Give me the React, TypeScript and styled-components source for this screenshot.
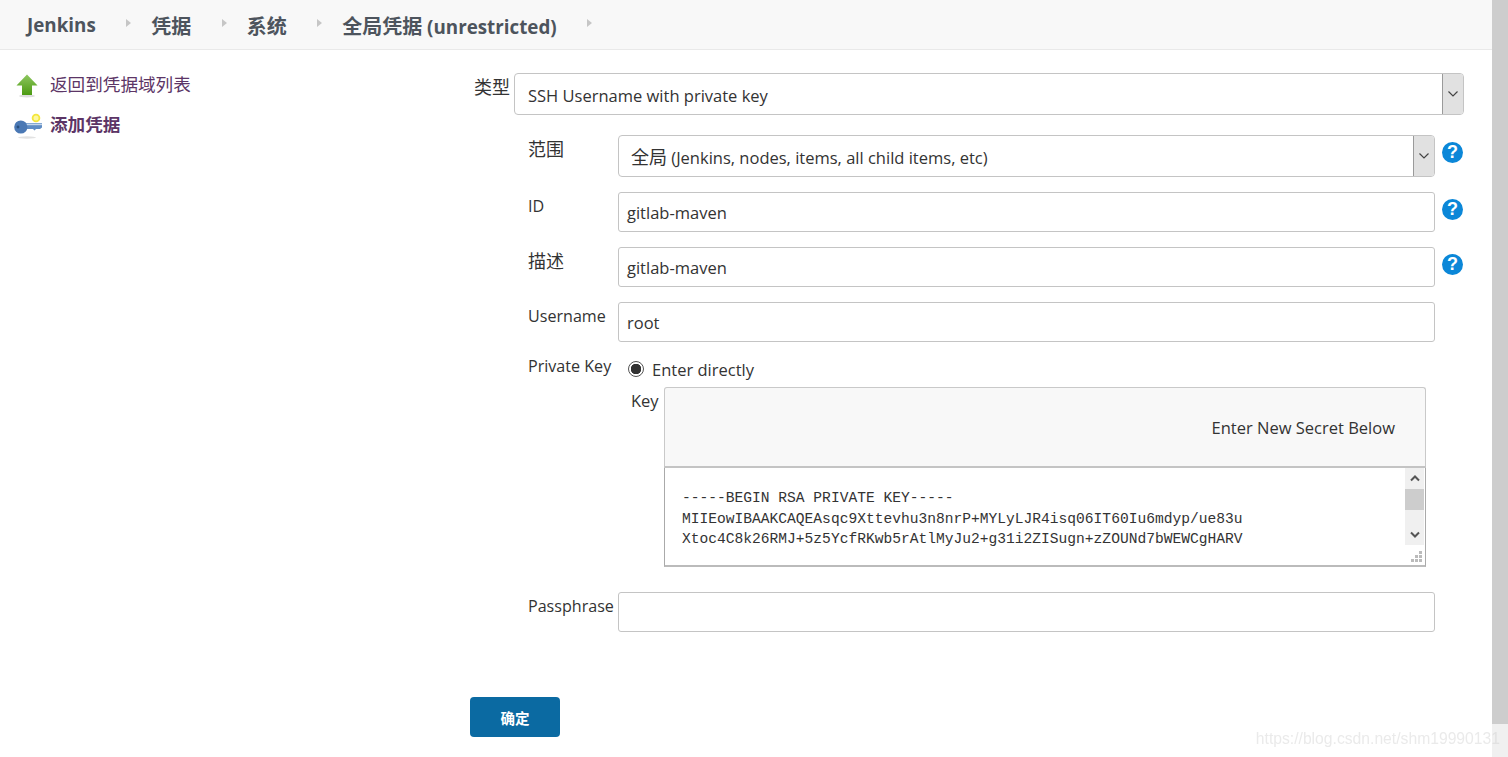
import { FC, ReactNode } from "react"
import styled, { createGlobalStyle } from "styled-components"

const FONT = `"Open Sans", "Noto Sans CJK SC", sans-serif`

const GlobalStyle = createGlobalStyle`
  html, body {
    margin: 0;
    height: 757px;
    overflow: hidden;
    background: #fff;
  }
  * {
    box-sizing: border-box;
  }
  body {
    font-family: ${FONT};
    font-size: 16.5px;
    color: #333;
  }
`

const crumbs: { cjk?: string; text?: string }[] = [
  { text: "Jenkins" },
  { cjk: "凭据" },
  { cjk: "系统" },
  { cjk: "全局凭据", text: " (unrestricted)" },
]

const UpIcon = () => (
  <svg width="26" height="26" viewBox="0 0 26 26">
    <defs>
      <linearGradient id="upg" x1="0" y1="0" x2="0" y2="1">
        <stop offset="0" stopColor="#8ec760" />
        <stop offset="1" stopColor="#4c9a12" />
      </linearGradient>
    </defs>
    <ellipse cx="13" cy="24" rx="8" ry="1.4" fill="#ddd" />
    <path d="M13 2.5 L23.5 13.5 H18 V23 H8 V13.5 H2.5 Z" fill="url(#upg)" />
  </svg>
)

const KeyIcon = () => (
  <svg width="30" height="28" viewBox="0 0 30 28">
    <ellipse cx="13" cy="26.5" rx="9" ry="1.2" fill="#e2e2e2" />
    <circle cx="22" cy="7" r="3.4" fill="#fdf8a0" stroke="#f4e63c" strokeWidth="1.8" />
    <path d="M10 12 H28 V16.5 L26 18 H22 L20.5 19.5 L19 18 H10 Z" fill="#5f8cc4" />
    <rect x="11" y="12.6" width="17" height="1.6" fill="#c4d6ec" />
    <circle cx="6.8" cy="16" r="6.6" fill="#4a78b4" />
    <circle cx="4" cy="16" r="1.4" fill="#28507f" />
  </svg>
)

const Chevron = () => (
  <svg width="12" height="8" viewBox="0 0 12 8">
    <path d="M1.5 1.5 L6 6 L10.5 1.5" fill="none" stroke="#444" strokeWidth="1.2" />
  </svg>
)

type FieldProps = {
  label: ReactNode
  help?: boolean
  children: ReactNode
}

const Field: FC<FieldProps> = ({ label, help, children }) => (
  <FieldRow>
    <FieldLabel>{label}</FieldLabel>
    {children}
    {help && <HelpBadge>?</HelpBadge>}
  </FieldRow>
)

const App = () => {
  return (
    <>
      <GlobalStyle />
      <Page>
        <Main>
          <Breadcrumbs>
            {crumbs.map((c, idx) => (
              <Crumb key={idx}>
                <CrumbText>
                  {c.cjk && <CrumbCjk>{c.cjk}</CrumbCjk>}
                  {c.text}
                </CrumbText>
                <CrumbArrow />
              </Crumb>
            ))}
          </Breadcrumbs>
          <Body>
            <Sidebar>
              <SideItem>
                <IconSlot>
                  <UpIcon />
                </IconSlot>
                <SideLink>返回到凭据域列表</SideLink>
              </SideItem>
              <SideItem>
                <IconSlot>
                  <KeyIcon />
                </IconSlot>
                <SideLink $active>添加凭据</SideLink>
              </SideItem>
            </Sidebar>
            <Form>
              <KindRow>
                <KindLabel>类型</KindLabel>
                <Select>
                  <SelectValue>SSH Username with private key</SelectValue>
                  <SelectArrow>
                    <Chevron />
                  </SelectArrow>
                </Select>
              </KindRow>
              <Fields>
                <Field label={<Cjk>范围</Cjk>} help>
                  <Select>
                    <SelectValue $indent>
                      <Cjk>全局</Cjk> (Jenkins, nodes, items, all child items, etc)
                    </SelectValue>
                    <SelectArrow>
                      <Chevron />
                    </SelectArrow>
                  </Select>
                </Field>
                <Field label="ID" help>
                  <TextBox>gitlab-maven</TextBox>
                </Field>
                <Field label={<Cjk>描述</Cjk>} help>
                  <TextBox>gitlab-maven</TextBox>
                </Field>
                <Field label="Username">
                  <TextBox>root</TextBox>
                </Field>
                <KeyField>
                  <FieldLabel>Private Key</FieldLabel>
                  <KeyBody>
                    <RadioLine>
                      <Radio />
                      Enter directly
                    </RadioLine>
                    <KeyRow>
                      <KeyLabel>Key</KeyLabel>
                      <SecretBox>
                        <SecretHead>Enter New Secret Below</SecretHead>
                        <SecretArea>
                          <SecretText>
                            -----BEGIN RSA PRIVATE KEY-----
                            <br />
                            MIIEowIBAAKCAQEAsqc9Xttevhu3n8nrP+MYLyLJR4isq06IT60Iu6mdyp/ue83u
                            <br />
                            Xtoc4C8k26RMJ+5z5YcfRKwb5rAtlMyJu2+g31i2ZISugn+zZOUNd7bWEWCgHARV
                          </SecretText>
                          <ScrollTrack>
                            <ScrollBtn>
                              <svg width="10" height="7" viewBox="0 0 10 7">
                                <path d="M1 5.5 L5 1.5 L9 5.5" fill="none" stroke="#555" strokeWidth="2" />
                              </svg>
                            </ScrollBtn>
                            <ScrollThumb />
                            <ScrollBtn>
                              <svg width="10" height="7" viewBox="0 0 10 7">
                                <path d="M1 1.5 L5 5.5 L9 1.5" fill="none" stroke="#555" strokeWidth="2" />
                              </svg>
                            </ScrollBtn>
                          </ScrollTrack>
                          <ResizeGrip>
                            <svg width="12" height="12" viewBox="0 0 12 12">
                              <path d="M9 0h3v3H9zM5 4h3v3H5zM9 4h3v3H9zM1 8h3v3H1zM5 8h3v3H5zM9 8h3v3H9z" fill="#bbb" />
                            </svg>
                          </ResizeGrip>
                        </SecretArea>
                      </SecretBox>
                    </KeyRow>
                  </KeyBody>
                </KeyField>
                <Field label="Passphrase">
                  <TextBox />
                </Field>
              </Fields>
              <SubmitBtn>确定</SubmitBtn>
            </Form>
          </Body>
        </Main>
        <PageScroll>
          <PageThumb />
        </PageScroll>
      </Page>
      <Watermark>https://blog.csdn.net/shm19990131</Watermark>
    </>
  )
}
export default App

const Page = styled.div`
  display: flex;
  width: 1508px;
  height: 757px;
  overflow: hidden;
`
const Main = styled.div`
  width: 1492px;
  display: flex;
  flex-direction: column;
`
const PageScroll = styled.div`
  width: 16px;
  background: #f0f0f0;
`
const PageThumb = styled.div`
  height: 724px;
  background: #cdcdcd;
`
const Breadcrumbs = styled.div`
  height: 50px;
  padding-left: 27px;
  display: flex;
  align-items: center;
  background: #f8f8f8;
  border-bottom: 1px solid #e9e9e9;
`
const Crumb = styled.div`
  display: flex;
  align-items: center;
`
const CrumbText = styled.span`
  padding-top: 1px;
  font-size: 18.8px;
  font-weight: 700;
  color: #4d545d;
`
const CrumbCjk = styled.span`
  font-size: 20px;
`
const CrumbArrow = styled.span`
  margin: 0 20px 4px 30.5px;
  width: 0;
  height: 0;
  border-left: 5px solid #c6c6c6;
  border-top: 4.5px solid transparent;
  border-bottom: 4.5px solid transparent;
`
const Body = styled.div`
  flex: 1;
  display: flex;
`
const Sidebar = styled.div`
  width: 470px;
  padding: 20px 0 0 14px;
  display: flex;
  flex-direction: column;
  gap: 10px;
`
const SideItem = styled.div`
  height: 30px;
  display: flex;
  align-items: center;
  gap: 6px;
`
const IconSlot = styled.div`
  width: 30px;
  display: flex;
  line-height: 0;
`
const SideLink = styled.span<{ $active?: boolean }>`
  padding-bottom: 3px;
  font-size: 17.6px;
  font-weight: ${({ $active }) => ($active ? 700 : 400)};
  color: #5c3566;
`
const Form = styled.div`
  width: 994px;
  display: flex;
  flex-direction: column;
  padding-top: 23px;
`
const KindRow = styled.div`
  display: flex;
  gap: 4px;
  padding-left: 4px;
`
const KindLabel = styled.div`
  width: 36px;
  padding-top: 1px;
  font-size: 18px;
  line-height: 26px;
`
const Select = styled.div`
  flex: 1;
  height: 42px;
  display: flex;
  border: 1px solid #c4c4c4;
  border-radius: 4px;
  background: #fff;
  overflow: hidden;
`
const SelectValue = styled.div<{ $indent?: boolean }>`
  flex: 1;
  padding-left: ${({ $indent }) => ($indent ? 12 : 13)}px;
  line-height: ${({ $indent }) => ($indent ? 42 : 44)}px;
`
const SelectArrow = styled.div`
  width: 21px;
  display: flex;
  align-items: center;
  justify-content: center;
  background: #e1e1e1;
  border-left: 1px solid #9a9a9a;
`
const Fields = styled.div`
  display: flex;
  flex-direction: column;
  padding: 20px 0 0 58px;
  gap: 15px;
`
const FieldRow = styled.div`
  width: 936px;
  display: grid;
  grid-template-columns: 90px 817px 28px;
  align-items: start;
`
const FieldLabel = styled.div`
  font-size: 16.1px;
  line-height: 28px;
`
const Cjk = styled.span`
  font-size: 18px;
`
const TextBox = styled.div`
  height: 40px;
  padding-left: 8px;
  line-height: 40px;
  border: 1px solid #c4c4c4;
  border-radius: 3px;
`
const HelpBadge = styled.span`
  width: 21px;
  height: 21px;
  margin: 6.5px 0 0 7px;
  display: flex;
  align-items: center;
  justify-content: center;
  border-radius: 50%;
  background: #0b87d8;
  color: #fff;
  font-family: "Liberation Sans", sans-serif;
  font-size: 18px;
  font-weight: 700;
`
const KeyField = styled.div`
  display: grid;
  grid-template-columns: 99px 808px;
  margin-top: -5px;
  padding-bottom: 10px;
`
const KeyBody = styled.div`
  display: flex;
  flex-direction: column;
`
const RadioLine = styled.div`
  height: 34px;
  padding-left: 1px;
  display: flex;
  align-items: center;
  gap: 8px;
`
const Radio = styled.span`
  width: 16px;
  height: 16px;
  border: 1px solid #555;
  border-radius: 50%;
  background: radial-gradient(circle, #333 0 5px, #fff 5.5px);
`
const KeyRow = styled.div`
  display: flex;
  padding-left: 4px;
  margin-top: 1px;
`
const KeyLabel = styled.div`
  width: 33px;
  line-height: 28px;
`
const SecretBox = styled.div`
  width: 762px;
  height: 180px;
  display: flex;
  flex-direction: column;
`
const SecretHead = styled.div`
  height: 81px;
  padding: 28px 30px 0 0;
  text-align: right;
  line-height: 24px;
  background: #f8f8f8;
  border: 1px solid #c9c9c9;
  border-bottom: 2px solid #c4c4c4;
  border-radius: 3px 3px 0 0;
`
const SecretArea = styled.div`
  flex: 1;
  position: relative;
  display: flex;
  background: #fff;
  border: 1px solid #aaa;
  border-top: none;
  border-bottom-width: 2px;
  border-bottom-color: #bbb;
`
const SecretText = styled.div`
  flex: 1;
  padding: 20px 0 0 17px;
  font-family: "Liberation Mono", monospace;
  font-size: 14.6px;
  line-height: 20.5px;
  color: #333;
  white-space: nowrap;
`
const ScrollTrack = styled.div`
  width: 19px;
  height: 77px;
  margin-right: 1px;
  display: flex;
  flex-direction: column;
  background: #f0f0f0;
`
const ScrollBtn = styled.div`
  height: 21px;
  display: flex;
  align-items: center;
  justify-content: center;
`
const ScrollThumb = styled.div`
  height: 21px;
  margin-bottom: auto;
  background: #cdcdcd;
`
const ResizeGrip = styled.div`
  position: absolute;
  right: 3px;
  bottom: 2px;
  line-height: 0;
`
const SubmitBtn = styled.button`
  width: 90px;
  height: 40px;
  margin-top: 65px;
  padding: 0;
  border: none;
  border-radius: 4px;
  background: #0b6aa2;
  color: #fff;
  font-family: ${FONT};
  font-size: 14.5px;
  font-weight: 700;
`
const Watermark = styled.div`
  position: fixed;
  right: 8px;
  bottom: 9px;
  font-family: "Liberation Sans", sans-serif;
  font-size: 15.7px;
  color: rgba(200, 200, 200, 0.38);
  pointer-events: none;
`
